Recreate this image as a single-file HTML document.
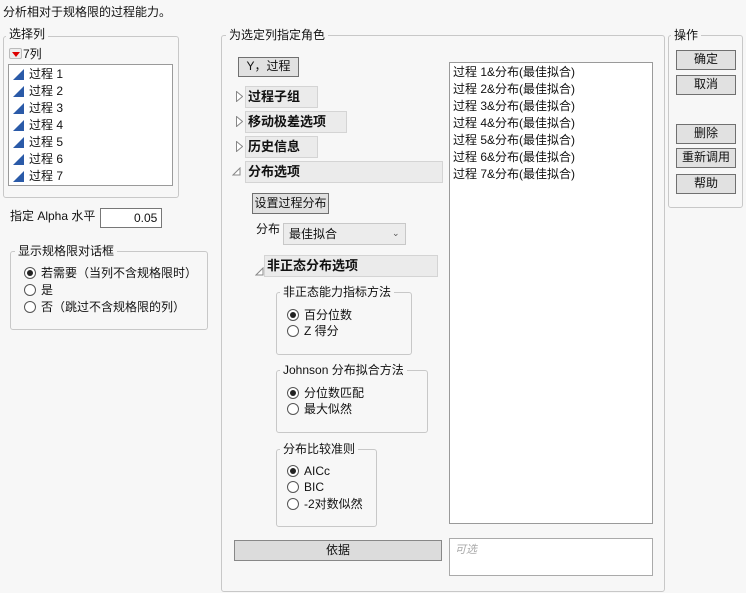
<!DOCTYPE html>
<html><head><meta charset="utf-8"><style>
*{box-sizing:border-box;margin:0;padding:0}
body{width:746px;height:593px;background:#f7f7f7;font-family:"Liberation Sans","Noto Sans CJK SC",sans-serif;font-size:12px;color:#111;position:relative;overflow:hidden}
.a{position:absolute;white-space:nowrap;line-height:14px}
.fs{position:absolute;border:1px solid #c8c8c8;border-radius:3px}
.lg{position:absolute;background:#f7f7f7;padding:0 3px;line-height:14px;white-space:nowrap}
.btn{position:absolute;background:#e1e1e1;border:1px solid #707070;text-align:center;line-height:17px}
.hdr{position:absolute;background:#ebebeb;border:1px solid #d4d4d4;font-weight:bold;font-size:13px;line-height:19px;padding-left:2px}
.box{position:absolute;background:#fff;border:1px solid #9a9a9a}
.r{position:absolute;width:12px;height:12px;border:1px solid #555;border-radius:50%;background:#fff}
.r.on::after{content:"";position:absolute;left:2px;top:2px;width:6px;height:6px;border-radius:50%;background:#222}
.tri{position:absolute;width:7px;height:11px}
.tri2{position:absolute;width:9px;height:9px}
.ic{position:absolute;width:12px;height:11px}
</style></head><body>
<div class="a" style="left:3px;top:5px">分析相对于规格限的过程能力。</div>

<div class="fs" style="left:3px;top:36px;width:176px;height:162px"></div>
<div class="lg" style="left:6px;top:27px">选择列</div>
<div style="position:absolute;left:9px;top:48px;width:13px;height:11px;background:#eee;border:1px solid #bbb;border-radius:2px"><div style="position:absolute;left:2px;top:3px;border-left:4px solid transparent;border-right:4px solid transparent;border-top:5px solid #d00"></div></div>
<div class="a" style="left:23px;top:47px">7列</div>
<div class="box" style="left:8px;top:64px;width:165px;height:122px"></div>
<div id="l1"></div>

<div class="a" style="left:10px;top:209px">指定 Alpha 水平</div>
<div class="box" style="left:100px;top:208px;width:62px;height:20px;border-color:#777"></div>
<div class="a" style="left:134px;top:211px">0.05</div>

<div class="fs" style="left:10px;top:251px;width:198px;height:79px"></div>
<div class="lg" style="left:15px;top:244px">显示规格限对话框</div>

<div class="fs" style="left:221px;top:35px;width:444px;height:557px"></div>
<div class="lg" style="left:226px;top:28px">为选定列指定角色</div>
<div class="btn" style="left:238px;top:57px;width:61px;height:20px">Y，过程</div>

<svg class="tri" style="left:236px;top:91px" viewBox="0 0 7 11"><path d="M0.5 0.5L6.5 5.5L0.5 10.5Z" fill="#fff" stroke="#888"/></svg><div class="hdr" style="left:245px;top:86px;width:73px;height:22px">过程子组</div>
<svg class="tri" style="left:236px;top:116px" viewBox="0 0 7 11"><path d="M0.5 0.5L6.5 5.5L0.5 10.5Z" fill="#fff" stroke="#888"/></svg><div class="hdr" style="left:245px;top:111px;width:102px;height:22px">移动极差选项</div>
<svg class="tri" style="left:236px;top:141px" viewBox="0 0 7 11"><path d="M0.5 0.5L6.5 5.5L0.5 10.5Z" fill="#fff" stroke="#888"/></svg><div class="hdr" style="left:245px;top:136px;width:73px;height:22px">历史信息</div>
<svg class="tri2" style="left:232px;top:167px" viewBox="0 0 9 9"><path d="M8 1L8 8L1 8Z" fill="#fff" stroke="#888"/></svg>
<div class="hdr" style="left:245px;top:161px;width:198px;height:22px">分布选项</div>
<div class="btn" style="left:252px;top:193px;width:77px;height:21px;line-height:18px">设置过程分布</div>
<div class="a" style="left:256px;top:222px">分布</div>
<div style="position:absolute;left:283px;top:223px;width:123px;height:22px;background:#ececec;border:1px solid #c8c8c8"></div>
<div class="a" style="left:289px;top:227px">最佳拟合</div>
<div class="a" style="left:392px;top:226px;font-size:9px;color:#555">⌄</div>
<svg class="tri2" style="left:255px;top:267px" viewBox="0 0 9 9"><path d="M8 1L8 8L1 8Z" fill="#fff" stroke="#888"/></svg>
<div class="hdr" style="left:264px;top:255px;width:174px;height:22px">非正态分布选项</div>

<div class="fs" style="left:276px;top:292px;width:136px;height:63px"></div>
<div class="lg" style="left:280px;top:285px">非正态能力指标方法</div>
<div class="fs" style="left:276px;top:370px;width:152px;height:63px"></div>
<div class="lg" style="left:280px;top:363px">Johnson 分布拟合方法</div>
<div class="fs" style="left:276px;top:449px;width:101px;height:78px"></div>
<div class="lg" style="left:280px;top:442px">分布比较准则</div>

<div class="btn" style="left:234px;top:540px;width:208px;height:21px;line-height:19px;border-color:#888;background:#dcdcdc">依据</div>

<div class="box" style="left:449px;top:62px;width:204px;height:462px"></div>
<div id="l2"></div>
<div class="box" style="left:449px;top:538px;width:204px;height:38px;border-color:#aaa"></div>
<div class="a" style="left:455px;top:543px;color:#aaa;font-style:italic;font-size:11px">可选</div>

<div class="fs" style="left:668px;top:35px;width:75px;height:173px"></div>
<div class="lg" style="left:671px;top:28px">操作</div>
<div class="btn" style="left:676px;top:50px;width:60px;height:20px">确定</div>
<div class="btn" style="left:676px;top:75px;width:60px;height:20px">取消</div>
<div class="btn" style="left:676px;top:124px;width:60px;height:20px">删除</div>
<div class="btn" style="left:676px;top:148px;width:60px;height:20px">重新调用</div>
<div class="btn" style="left:676px;top:174px;width:60px;height:20px">帮助</div>

<script>
var h='';
for(var i=0;i<7;i++){var y=67+i*17;
h+='<svg class="ic" style="left:13px;top:'+(y+2)+'px" viewBox="0 0 12 11"><path d="M11 0L11 11L0 11Z" fill="#2a5aa8"/></svg><div class="a" style="left:29px;top:'+y+'px">过程 '+(i+1)+'</div>';}
document.getElementById('l1').outerHTML=h;
h='';
for(var i=0;i<7;i++){h+='<div class="a" style="left:453px;top:'+(65+i*17)+'px">过程 '+(i+1)+'&amp;分布(最佳拟合)</div>';}
document.getElementById('l2').outerHTML=h;
var R=[[24,267,'若需要（当列不含规格限时）',1],[24,284,'是',0],[24,301,'否（跳过不含规格限的列）',0],
[287,309,'百分位数',1],[287,325,'Z 得分',0],[287,387,'分位数匹配',1],[287,403,'最大似然',0],
[287,465,'AICc',1],[287,481,'BIC',0],[287,498,'-2对数似然',0]];
h='';R.forEach(function(r){h+='<div class="r'+(r[3]?' on':'')+'" style="left:'+r[0]+'px;top:'+r[1]+'px"></div><div class="a" style="left:'+(r[0]+17)+'px;top:'+(r[1]-1)+'px">'+r[2]+'</div>';});
document.body.insertAdjacentHTML('beforeend',h);
</script>
</body></html>
